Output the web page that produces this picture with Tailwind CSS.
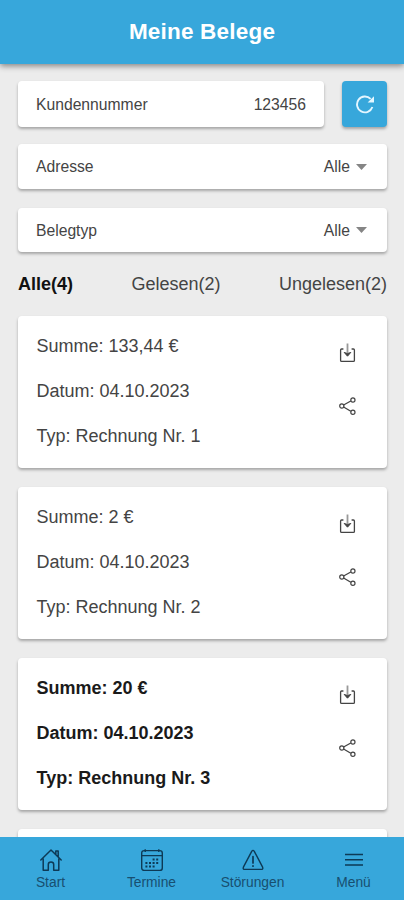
<!DOCTYPE html>
<html lang="de">
<head>
  <meta charset="UTF-8">
  <meta name="viewport" content="width=device-width, initial-scale=1.0">
  <title>Meine Belege</title>
  <script src="https://cdn.jsdelivr.net/npm/@tailwindcss/browser@4"></script>
</head>
<body class="bg-[#ececec] font-['Liberation_Sans',Arial,sans-serif] text-[#444]">
  <!-- icon sprites -->
  <svg class="hidden">
    <symbol id="download" viewBox="0 0 20 22" fill="none" stroke="currentColor">
      <path d="M6.4 7H4.6Q3.6 7 3.6 8V18.4Q3.6 19.4 4.6 19.4H16.4Q17.4 19.4 17.4 18.4V8Q17.4 7 16.4 7H14.6" stroke-width="1.3"/>
      <path d="M10.5 1.5V11.5" stroke-width="1.8" stroke="#999"/>
      <path d="M7.2 10.4L10.5 14.2L13.8 10.4L10.5 11.6Z" fill="currentColor"/>
    </symbol>
    <symbol id="share" viewBox="0 0 20 20" fill="none" stroke="currentColor">
      <path d="M6.6 9L13.8 5M6.6 11L13.8 15.2" stroke-width="1.3"/>
      <circle cx="4.8" cy="10" r="2.1" stroke-width="1.2"/>
      <circle cx="15.9" cy="4" r="2.1" stroke-width="1.2"/>
      <circle cx="15.9" cy="16.2" r="2.1" stroke-width="1.2"/>
    </symbol>
  </svg>

  <div class="h-[900px] flex flex-col overflow-hidden">
    <header class="h-16 shrink-0 z-10 bg-[#37a7db] flex items-center justify-center shadow-[0_2px_6px_rgba(0,0,0,0.45)]">
      <h1 class="text-[22.5px] font-bold text-white tracking-[0.2px]">Meine Belege</h1>
    </header>

    <main class="flex-1 min-h-0 overflow-hidden pl-[18px] pr-[17px] pt-[17px]">
      <div class="flex gap-[18px]">
        <div class="flex-1 h-[46px] bg-white rounded-[4px] shadow-[0_2px_3px_rgba(0,0,0,0.3)] px-[18px] pt-px flex items-center justify-between text-[15.7px]">
          <span>Kundennummer</span>
          <span>123456</span>
        </div>
        <button class="w-[45px] h-[46px] bg-[#37a7db] rounded-[4px] shadow-[0_2px_3px_rgba(0,0,0,0.3)] flex items-center justify-center text-[#e4f6ff]">
          <svg class="w-5 h-5" viewBox="0 0 20 20" fill="none" stroke="currentColor" stroke-width="1.9">
            <path d="M15.6 4.9A7.9 7.9 0 1 0 17.4 13"/>
            <path d="M19 2.2V8.4H12.6Z" fill="currentColor" stroke="none"/>
          </svg>
        </button>
      </div>

      <div class="mt-[17px] h-[45px] bg-white rounded-[4px] shadow-[0_2px_3px_rgba(0,0,0,0.3)] pl-[18px] pr-5 pt-px flex items-center justify-between text-[15.7px]">
        <span>Adresse</span>
        <span class="flex items-center gap-[6px]">Alle
          <svg class="w-[11px] h-[6px]" viewBox="0 0 11 6"><path d="M0 0H11L5.5 6Z" fill="#858585"/></svg>
        </span>
      </div>
      <div class="mt-[19px] h-[44px] bg-white rounded-[4px] shadow-[0_2px_3px_rgba(0,0,0,0.3)] pl-[18px] pr-5 pt-px flex items-center justify-between text-[15.7px]">
        <span>Belegtyp</span>
        <span class="flex items-center gap-[6px]">Alle
          <svg class="w-[11px] h-[6px]" viewBox="0 0 11 6"><path d="M0 0H11L5.5 6Z" fill="#858585"/></svg>
        </span>
      </div>

      <div class="h-16 flex items-center justify-between text-[18px]">
        <span class="font-bold text-[#111]">Alle(4)</span>
        <span>Gelesen(2)</span>
        <span>Ungelesen(2)</span>
      </div>

      <div class="flex flex-col gap-[19px]">
        <div class="h-[152px] shrink-0 bg-white rounded-[4px] shadow-[0_2px_3px_rgba(0,0,0,0.3)] pl-[18.5px] pr-[30.5px] flex justify-between text-[18px]">
          <div class="pt-2 leading-[45px]">
            <p>Summe: 133,44 €</p>
            <p>Datum: 04.10.2023</p>
            <p>Typ: Rechnung Nr. 1</p>
          </div>
          <div class="pt-[26px] flex flex-col gap-8">
            <svg class="w-5 h-[22px]"><use href="#download"/></svg>
            <svg class="w-5 h-5"><use href="#share"/></svg>
          </div>
        </div>

        <div class="h-[152px] shrink-0 bg-white rounded-[4px] shadow-[0_2px_3px_rgba(0,0,0,0.3)] pl-[18.5px] pr-[30.5px] flex justify-between text-[18px]">
          <div class="pt-2 leading-[45px]">
            <p>Summe: 2 €</p>
            <p>Datum: 04.10.2023</p>
            <p>Typ: Rechnung Nr. 2</p>
          </div>
          <div class="pt-[26px] flex flex-col gap-8">
            <svg class="w-5 h-[22px]"><use href="#download"/></svg>
            <svg class="w-5 h-5"><use href="#share"/></svg>
          </div>
        </div>

        <!-- unread -->
        <div class="h-[152px] shrink-0 bg-white rounded-[4px] shadow-[0_2px_3px_rgba(0,0,0,0.3)] pl-[18.5px] pr-[30.5px] flex justify-between text-[18px]">
          <div class="pt-2 leading-[45px] font-bold text-[#1a1a1a]">
            <p>Summe: 20 €</p>
            <p>Datum: 04.10.2023</p>
            <p>Typ: Rechnung Nr. 3</p>
          </div>
          <div class="pt-[26px] flex flex-col gap-8">
            <svg class="w-5 h-[22px]"><use href="#download"/></svg>
            <svg class="w-5 h-5"><use href="#share"/></svg>
          </div>
        </div>

        <div class="h-[152px] shrink-0 bg-white rounded-[4px] shadow-[0_2px_3px_rgba(0,0,0,0.3)]"></div>
      </div>
    </main>

    <nav class="h-[63px] shrink-0 z-10 bg-[#37a7db] grid grid-cols-4 text-[#184f70] text-[13.8px]">
      <a class="flex flex-col items-center pt-[11px]">
        <svg class="w-6 h-6" viewBox="0 0 24 24" fill="none" stroke="#0d3a56" stroke-width="1.5" stroke-linejoin="round" stroke-linecap="round">
          <path d="M1.8 12L12 2L22.2 12M16.8 6.2V3H19.2V8.6M4.2 10.4V22.2H9.3V16.4Q9.3 14 12 14Q14.7 14 14.7 16.4V22.2H19.8V10.4"/>
        </svg>
        <span class="leading-[22px]">Start</span>
      </a>
      <a class="flex flex-col items-center pt-[11px]">
        <svg class="w-6 h-6" viewBox="0 0 24 24" fill="none" stroke="#0d3a56" stroke-width="1.4">
          <rect x="1.7" y="2.6" width="20.6" height="19.8" rx="2.5"/>
          <path d="M1.7 7.6H22.3M5.2 1.2V4M18.8 1.2V4"/>
          <path d="M12.6 11.4H19.8M5.4 15H19.8M5.4 18.6H16.2" stroke-width="2" stroke-dasharray="2 1.6"/>
        </svg>
        <span class="leading-[22px]">Termine</span>
      </a>
      <a class="flex flex-col items-center pt-[11px]">
        <svg class="w-6 h-6" viewBox="0 0 24 24" fill="none" stroke="#0d3a56" stroke-width="1.4" stroke-linejoin="round" stroke-linecap="round">
          <path d="M10.7 3.4Q12 1.4 13.3 3.4L21.6 19.2Q22.4 21.4 20.2 21.4H3.8Q1.6 21.4 2.4 19.2Z"/>
          <path d="M12 8.6V15M12 17.8V18.2" stroke-width="1.7"/>
        </svg>
        <span class="leading-[22px]">Störungen</span>
      </a>
      <a class="flex flex-col items-center pt-[11px]">
        <svg class="w-6 h-6" viewBox="0 0 24 24" fill="none" stroke="#0d3a56" stroke-width="1.5">
          <path d="M3 6.6H21M3 11.8H21M3 17H21"/>
        </svg>
        <span class="leading-[22px]">Menü</span>
      </a>
    </nav>
  </div>
</body>
</html>
